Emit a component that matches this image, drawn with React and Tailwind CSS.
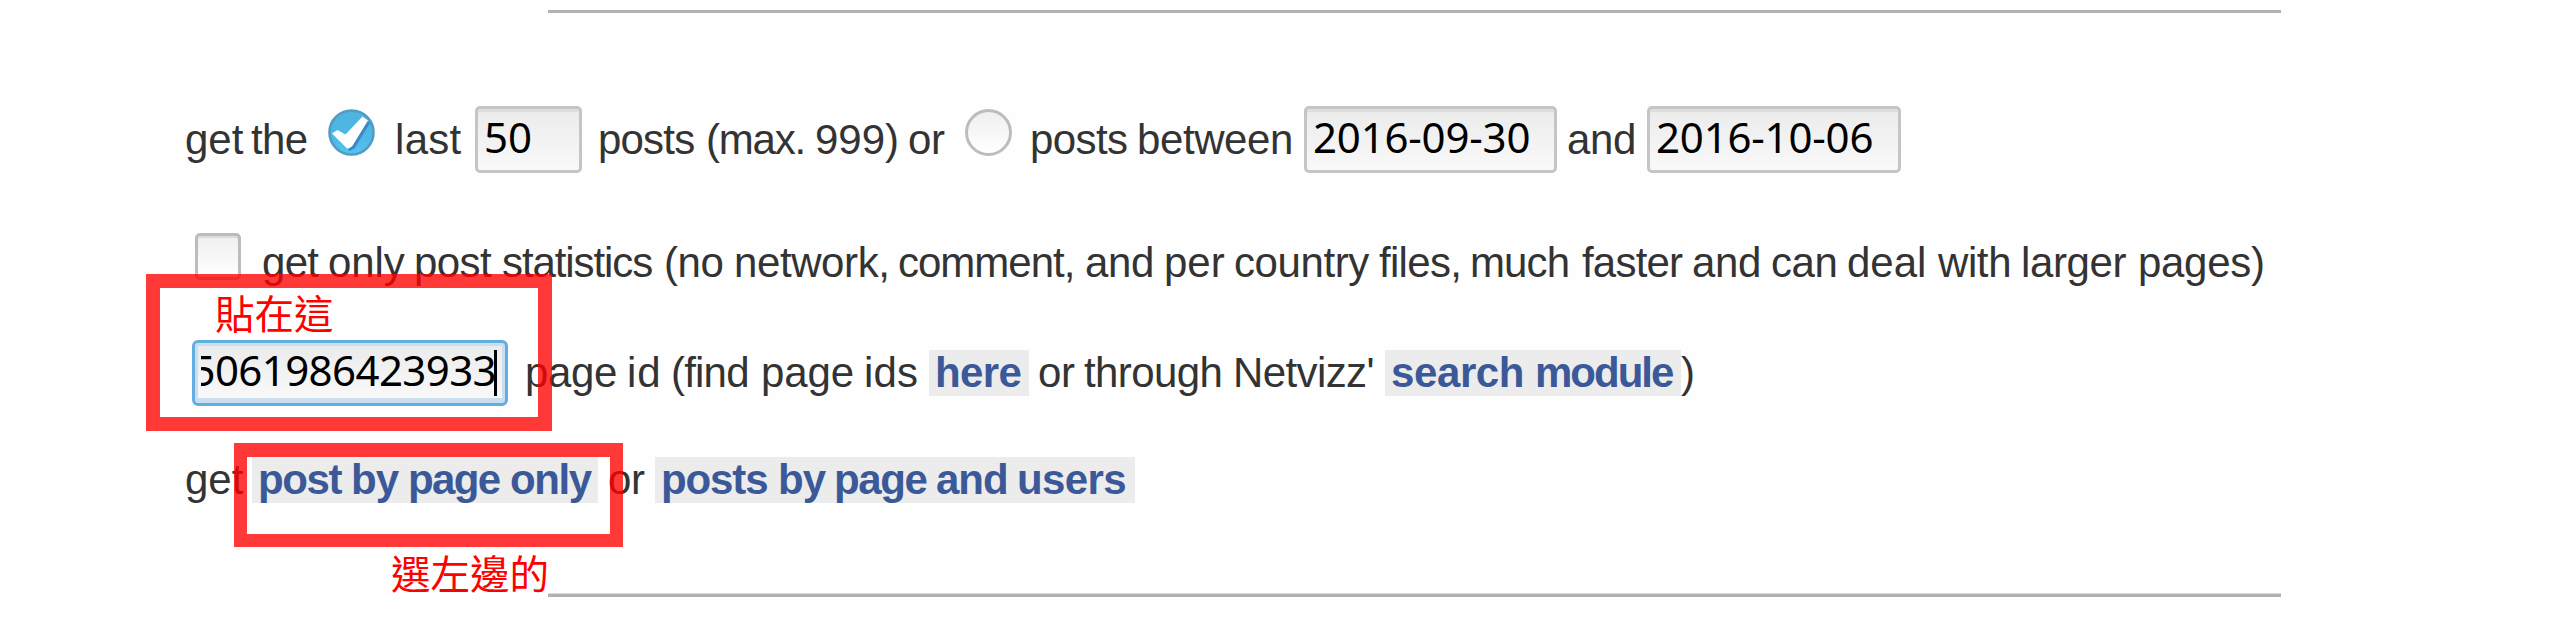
const field =
  'flex h-[67px] shrink-0 overflow-hidden rounded-[5px] border-[3px] border-[#c5c5c5] bg-linear-to-b from-[#ebebeb] to-[#f9f9f9] font-["Noto_Sans",sans-serif] text-[42px] leading-[56px] text-black shadow-[inset_0_3px_0_#dedede]';

// One word of running text; its box reaches to the start of the next item.
function W({ c, children }) {
  return <span className={`block shrink-0 whitespace-nowrap ${c}`}>{children}</span>;
}

function Link({ c, children }) {
  return (
    <a className={`flex h-[46px] shrink-0 bg-[#ececec] font-bold text-[#3b5998] ${c}`}>
      {children}
    </a>
  );
}

function CheckedRadio() {
  return (
    <svg viewBox="0 0 47 47" className="mt-[3px] mr-[19px] size-[47px] shrink-0">
      <defs>
        <linearGradient id="radio" x1="0" y1="0" x2="0" y2="1">
          <stop offset="0" stopColor="#4fb3dd" />
          <stop offset="0.6" stopColor="#4db8e6" />
          <stop offset="1" stopColor="#55c4ee" />
        </linearGradient>
      </defs>
      <circle cx="23.5" cy="23.5" r="22" fill="url(#radio)" stroke="#4f9cc4" strokeWidth="2.6" />
      <path d="M5 25 L10.5 21 L18 26.5 L34.5 8.5 L40.5 12.5 L25 38 L20 40.5 Z" fill="#3b87c8" transform="translate(1.5 1.5)" />
      <path d="M4 24.5 L9.5 21 L17.5 25.5 L34.5 7.5 L40 11.5 L24 37.5 L19.5 40 Z" fill="#fff" />
    </svg>
  );
}

export default function App() {
  return (
    <main className='relative h-[629px] w-[2557px] overflow-hidden bg-[#fefefe] pt-[10px] font-["Liberation_Sans",Arial,sans-serif] text-[42px] leading-[45px] tracking-[-0.4px] text-[#333333]'>
      <hr className="ml-[548px] h-[3px] w-[1733px] border-0 bg-[#b1b1b1]" />

      <div className="mt-[93px] flex h-[67px] items-start pl-[185px]">
        <div className="flex pt-[11px]">
          <W c="w-[66px] tracking-[0px]">get</W>
          <W c="w-[77px] tracking-[-0.6px]">the</W>
        </div>
        <CheckedRadio />
        <div className="flex pt-[11px] pl-[1px]">
          <W c="w-[80px] tracking-[0.3px]">last</W>
        </div>
        <div className={`${field} w-[107px] pl-[6px] tracking-[0px]`}>50</div>
        <div className="flex pt-[11px] pl-[16px]">
          <W c="w-[108px] tracking-[-0.8px]">posts</W>
          <W c="w-[109px] tracking-[-1.2px]">(max.</W>
          <W c="w-[93px] tracking-[0px]">999)</W>
          <W c="w-[57px]">or</W>
        </div>
        <span className="mt-[3px] mr-[17px] block size-[47px] shrink-0 rounded-full border-[3px] border-[#bcbcbc] bg-linear-to-b from-[#efefef] to-white" />
        <div className="flex pt-[11px] pl-[1px]">
          <W c="w-[107px] tracking-[-0.6px]">posts</W>
          <W c="w-[167px]">between</W>
        </div>
        <div className={`${field} w-[253px] pl-[6px] tracking-[-0.2px]`}>2016-09-30</div>
        <div className="flex pt-[11px] pl-[10px]">
          <W c="w-[80px]">and</W>
        </div>
        <div className={`${field} w-[254px] pl-[6px] tracking-[-0.2px]`}>2016-10-06</div>
      </div>

      <div className="mt-[60px] flex h-[47px] items-start pl-[195px]">
        <span className="mr-[21px] block h-[47px] w-[46px] shrink-0 rounded-[5px] border-[3px] border-[#bcbcbc] bg-linear-to-b from-[#efefef] to-white shadow-[inset_0_2px_0_#dcdcdc]" />
        <div className="flex pt-[7px]">
          <W c="w-[66px] tracking-[-0.7px]">get</W>
          <W c="w-[86px] tracking-[-0.1px]">only</W>
          <W c="w-[88px] tracking-[-0.6px]">post</W>
          <W c="w-[162px] tracking-[-1.1px]">statistics</W>
          <W c="w-[70px]">(no</W>
          <W c="w-[164px]">network,</W>
          <W c="w-[187px] tracking-[-1px]">comment,</W>
          <W c="w-[79px]">and</W>
          <W c="w-[70px] tracking-[0px]">per</W>
          <W c="w-[145px]">country</W>
          <W c="w-[91px] tracking-[-0.7px]">files,</W>
          <W c="w-[112px] tracking-[-0.9px]">much</W>
          <W c="w-[110px] tracking-[-0.8px]">faster</W>
          <W c="w-[79px]">and</W>
          <W c="w-[76px]">can</W>
          <W c="w-[91px] tracking-[0px]">deal</W>
          <W c="w-[83px]">with</W>
          <W c="w-[117px]">larger</W>
          <W c="w-[130px] tracking-[-0.3px]">pages)</W>
        </div>
      </div>

      <div className="mt-[60px] flex h-[66px] items-start pl-[192px]">
        <div className='flex h-[66px] w-[316px] shrink-0 rounded-[6px] border-[3px] border-[#63aee0] bg-[#c9dfef] px-[3px] pt-[3px] pb-[5px] font-["Noto_Sans",sans-serif] text-black'>
          <div className="flex w-full bg-linear-to-b from-[#ebebeb] to-[#f9f9f9] pl-[3px]">
            <div className="flex w-full items-start justify-end overflow-hidden pr-[5px]">
              <span className="-mr-[2px] block leading-[48px] tracking-[-0.6px]">5061986423933</span>
              <span className="mt-[4px] block h-[46px] w-[3px] shrink-0 bg-black" />
            </div>
          </div>
        </div>
        <div className="flex pt-[10px] pl-[17px]">
          <W c="w-[102px]">page</W>
          <W c="w-[44px] tracking-[1px]">id</W>
          <W c="w-[90px] tracking-[-0.8px]">(find</W>
          <W c="w-[103px] tracking-[-0.1px]">page</W>
          <W c="w-[65px] tracking-[0.2px]">ids</W>
          <Link c="w-[100px] pl-[6px]">
            <W c="tracking-[-0.6px]">here</W>
          </Link>
          <W c="ml-[9px] w-[46px]">or</W>
          <W c="w-[149px] tracking-[-0.6px]">through</W>
          <W c="w-[152px] tracking-[-0.6px]">Netvizz&#39;</W>
          <Link c="w-[296px] pl-[6px]">
            <W c="w-[144px]">search</W>
            <W c="tracking-[-2px]">module</W>
          </Link>
          <W c="">)</W>
        </div>
      </div>

      <div className="mt-[51px] flex h-[46px] items-start pl-[185px]">
        <W c="w-[67px] tracking-[0px]">get</W>
        <Link c="w-[346px] pl-[6px]">
          <W c="w-[93px] tracking-[-1.4px]">post</W>
          <W c="w-[57px] tracking-[-0.8px]">by</W>
          <W c="w-[102px] tracking-[-1.6px]">page</W>
          <W c="tracking-[-1.4px]">only</W>
        </Link>
        <W c="ml-[10px] w-[47px]">or</W>
        <Link c="w-[480px] pl-[6px]">
          <W c="w-[117px] tracking-[-1.1px]">posts</W>
          <W c="w-[56px] tracking-[-0.8px]">by</W>
          <W c="w-[102px] tracking-[-1.4px]">page</W>
          <W c="w-[81px] tracking-[-1px]">and</W>
          <W c="tracking-[-0.6px]">users</W>
        </Link>
      </div>

      <hr className="mt-[90px] ml-[548px] h-[4px] w-[1733px] border-0 border-t border-[#dcdcdc] bg-[#b1b1b1]" />

      {/* Red annotations lying over the form */}
      <div className="absolute top-[274px] left-[146px] h-[157px] w-[406px] border-[14px] border-[#ff0000]/78" />
      <div className='absolute top-[292px] left-[215px] font-["Noto_Sans_CJK_TC",sans-serif] text-[39.5px] leading-[40px] tracking-[0px] whitespace-nowrap text-[#ff0000]'>
        貼在這
      </div>
      <div className="absolute top-[443px] left-[234px] h-[104px] w-[389px] border-[13px] border-t-[14px] border-[#ff0000]/78" />
      <div className='absolute top-[552px] left-[391px] font-["Noto_Sans_CJK_TC",sans-serif] text-[39.5px] leading-[40px] tracking-[0px] whitespace-nowrap text-[#ff0000]'>
        選左邊的
      </div>
    </main>
  );
}
